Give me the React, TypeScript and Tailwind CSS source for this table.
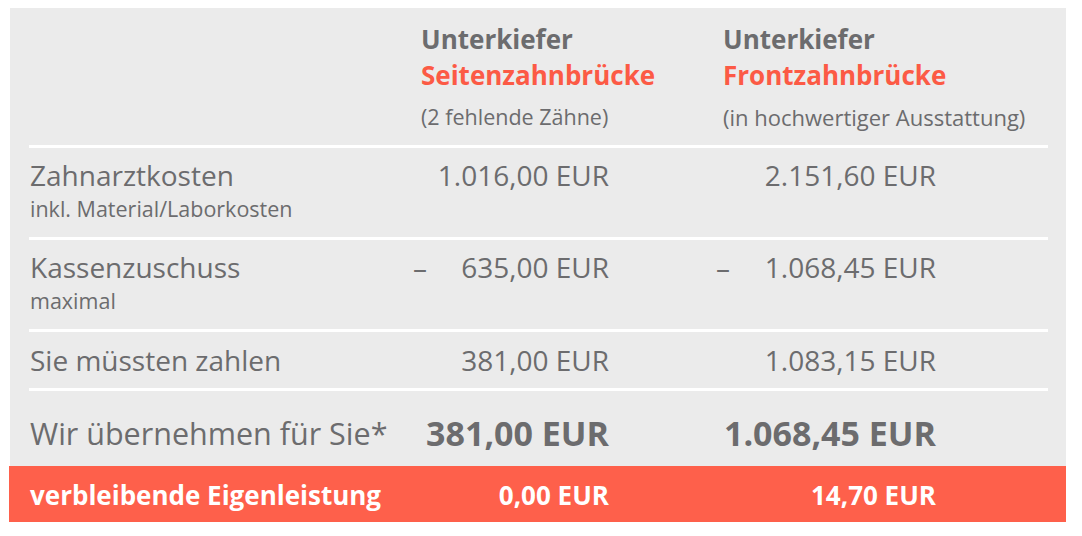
const FONT = { fontFamily: "'Open Sans', 'Noto Sans', sans-serif" };

type Row = {
  label: string;
  note?: string;
  a: string;
  b: string;
  minus?: boolean;
};

const rows: Row[] = [
  { label: "Zahnarztkosten", note: "inkl. Material/Laborkosten", a: "1.016,00 EUR", b: "2.151,60 EUR" },
  { label: "Kassenzuschuss", note: "maximal", a: "635,00 EUR", b: "1.068,45 EUR", minus: true },
];

function Value({ value, minus, width }: { value: string; minus?: boolean; width: string }) {
  return (
    <div className={`flex items-start justify-end whitespace-nowrap ${width}`}>
      {minus && <span className="mr-auto -ml-[7px]">–</span>}
      <span>{value}</span>
    </div>
  );
}

function Rule() {
  return <div className="h-[3px] bg-white" />;
}

export default function App() {
  return (
    <div className="bg-white pt-2 pl-[10px] w-[1082px] h-[536px]" style={FONT}>
      <div className="w-[1056px] bg-[#ebebeb] pl-[19px] pr-[18px] text-[#6c6c6e]">
        {/* header */}
        <div className="grid grid-cols-[391px_303px_1fr] pt-[13px] h-[137px]">
          <div />
          <div className="pl-px">
            <div className="text-[26px] font-bold leading-[36px]">Unterkiefer</div>
            <div className="text-[26px] font-bold leading-[36px] text-[#fc5a45]">Seitenzahnbrücke</div>
            <div className="text-[21.5px] leading-[28px] mt-[10px]">(2 fehlende Zähne)</div>
          </div>
          <div>
            <div className="text-[26px] font-bold leading-[36px]">Unterkiefer</div>
            <div className="text-[26px] font-bold leading-[36px] text-[#fc5a45]">Frontzahnbrücke</div>
            <div className="text-[22px] leading-[28px] mt-[10px]">(in hochwertiger Ausstattung)</div>
          </div>
        </div>
        <Rule />

        {rows.map((r) => (
          <div key={r.label}>
            <div className="grid grid-cols-[391px_303px_1fr] h-[89px] pt-[10px] text-[28px] leading-[34px]">
              <div className="pl-px">
                <div>{r.label}</div>
                <div className="text-[21.5px] leading-[34px]">{r.note}</div>
              </div>
              <Value value={r.a} minus={r.minus} width="w-[189px]" />
              <Value value={r.b} minus={r.minus} width="w-[213px]" />
            </div>
            <Rule />
          </div>
        ))}

        <div className="grid grid-cols-[391px_303px_1fr] h-[56px] items-center text-[28px]">
          <div className="pl-px">Sie müssten zahlen</div>
          <Value value="381,00 EUR" width="w-[189px]" />
          <Value value="1.083,15 EUR" width="w-[213px]" />
        </div>
        <div className="h-[3px] bg-white" />

        <div className="grid grid-cols-[391px_303px_1fr] h-[75px] items-center pt-[10px]">
          <div className="pl-px text-[30.5px]">Wir übernehmen für Sie*</div>
          <Value value="381,00 EUR" width="w-[189px] font-bold text-[34px]" />
          <Value value="1.068,45 EUR" width="w-[213px] font-bold text-[34px]" />
        </div>
      </div>

      <div className="w-[1057px] -ml-px bg-[#fe604b] pl-[20px] pt-[3px] text-white font-bold text-[26px] h-[56px] grid grid-cols-[391px_303px_1fr] items-center">
        <div className="pl-px">verbleibende Eigenleistung</div>
        <Value value="0,00 EUR" width="w-[189px]" />
        <Value value="14,70 EUR" width="w-[213px]" />
      </div>
    </div>
  );
}
